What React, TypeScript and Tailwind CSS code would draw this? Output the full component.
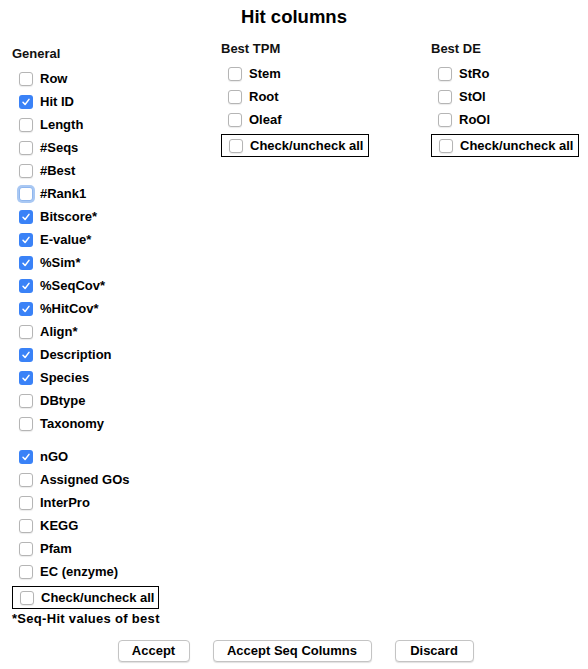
import React from "react";

type Item = { label: string; checked?: boolean; focus?: boolean };

const general: Item[] = [
  { label: "Row" },
  { label: "Hit ID", checked: true },
  { label: "Length" },
  { label: "#Seqs" },
  { label: "#Best" },
  { label: "#Rank1", focus: true },
  { label: "Bitscore*", checked: true },
  { label: "E-value*", checked: true },
  { label: "%Sim*", checked: true },
  { label: "%SeqCov*", checked: true },
  { label: "%HitCov*", checked: true },
  { label: "Align*" },
  { label: "Description", checked: true },
  { label: "Species", checked: true },
  { label: "DBtype" },
  { label: "Taxonomy" },
];

const annot: Item[] = [
  { label: "nGO", checked: true },
  { label: "Assigned GOs" },
  { label: "InterPro" },
  { label: "KEGG" },
  { label: "Pfam" },
  { label: "EC (enzyme)" },
];

function Box({ checked, focus }: { checked?: boolean; focus?: boolean }) {
  if (checked) {
    return (
      <span className="w-[14px] h-[14px] rounded-[3px] bg-[#3a82f7] flex items-center justify-center shrink-0">
        <svg width="10" height="10" viewBox="0 0 10 10">
          <path d="M2 5.2 L4.1 7.5 L8 2.4" fill="none" stroke="white" strokeWidth="1.5" strokeLinecap="round" strokeLinejoin="round" />
        </svg>
      </span>
    );
  }
  return (
    <span
      className={
        focus
          ? "w-[14px] h-[14px] rounded-[3px] bg-white border border-[#8fb6ee] shadow-[0_0_0_2px_#a9c8f3] shrink-0"
          : "w-[14px] h-[14px] rounded-[3px] bg-white border border-[#b5b5b5] shadow-[0_1px_1px_rgba(0,0,0,0.08)] shrink-0"
      }
    />
  );
}

function Row({ item }: { item: Item }) {
  return (
    <div className="h-[23px] flex items-center pl-[7px] gap-[7px]">
      <Box checked={item.checked} focus={item.focus} />
      <span className="font-bold text-[13px] text-black whitespace-nowrap">{item.label}</span>
    </div>
  );
}

function CheckAll({ width }: { width: string }) {
  return (
    <div className={`${width} h-[23px] border border-black flex items-center pl-[7px] gap-[7px]`}>
      <Box />
      <span className="font-bold text-[13px] text-black whitespace-nowrap">Check/uncheck all</span>
    </div>
  );
}

function Btn({ label, width }: { label: string; width: string }) {
  return (
    <button className={`${width} h-[22px] rounded-[4px] border border-[#c4c4c4] bg-white shadow-[0_1px_1px_rgba(0,0,0,0.12)] font-bold text-[13px] text-black flex items-center justify-center`}>
      {label}
    </button>
  );
}

export default function App() {
  return (
    <div
      className="w-[588px] h-[669px] bg-white overflow-hidden"
      style={{ fontFamily: '"Liberation Sans", Arial, sans-serif' }}
    >
      <div className="pt-[6px] h-[22px] text-center font-bold text-[18.5px] leading-[22px] text-black box-content">
        Hit columns
      </div>
      <div className="flex mt-[12px]">
        <div className="w-[221px] pl-[12px] pt-[5px]">
          <div className="h-[18px] leading-[18px] text-[13px] font-bold text-[#111]">General</div>
          <div className="mt-[4px]">
            {general.map((it) => (
              <Row key={it.label} item={it} />
            ))}
          </div>
          <div className="mt-[10px]">
            {annot.map((it) => (
              <Row key={it.label} item={it} />
            ))}
          </div>
          <div className="mt-[3px]">
            <CheckAll width="w-[147px]" />
          </div>
          <div className="mt-[1px] h-[18px] leading-[18px] font-bold text-[13px] tracking-[0.3px] text-black whitespace-nowrap">
            *Seq-Hit values of best
          </div>
        </div>
        <div className="w-[210px]">
          <div className="h-[18px] leading-[18px] text-[13px] font-bold text-[#111]">Best TPM</div>
          <div className="mt-[4px]">
            {["Stem", "Root", "Oleaf"].map((l) => (
              <Row key={l} item={{ label: l }} />
            ))}
          </div>
          <div className="mt-[3px]">
            <CheckAll width="w-[148px]" />
          </div>
        </div>
        <div className="flex-1">
          <div className="h-[18px] leading-[18px] text-[13px] font-bold text-[#111]">Best DE</div>
          <div className="mt-[4px]">
            {["StRo", "StOl", "RoOl"].map((l) => (
              <Row key={l} item={{ label: l }} />
            ))}
          </div>
          <div className="mt-[3px]">
            <CheckAll width="w-[148px]" />
          </div>
        </div>
      </div>
      <div className="flex justify-center gap-[23px] mt-[12px] pl-[3px]">
        <Btn label="Accept" width="w-[72px]" />
        <Btn label="Accept Seq Columns" width="w-[159px]" />
        <Btn label="Discard" width="w-[79px]" />
      </div>
    </div>
  );
}
